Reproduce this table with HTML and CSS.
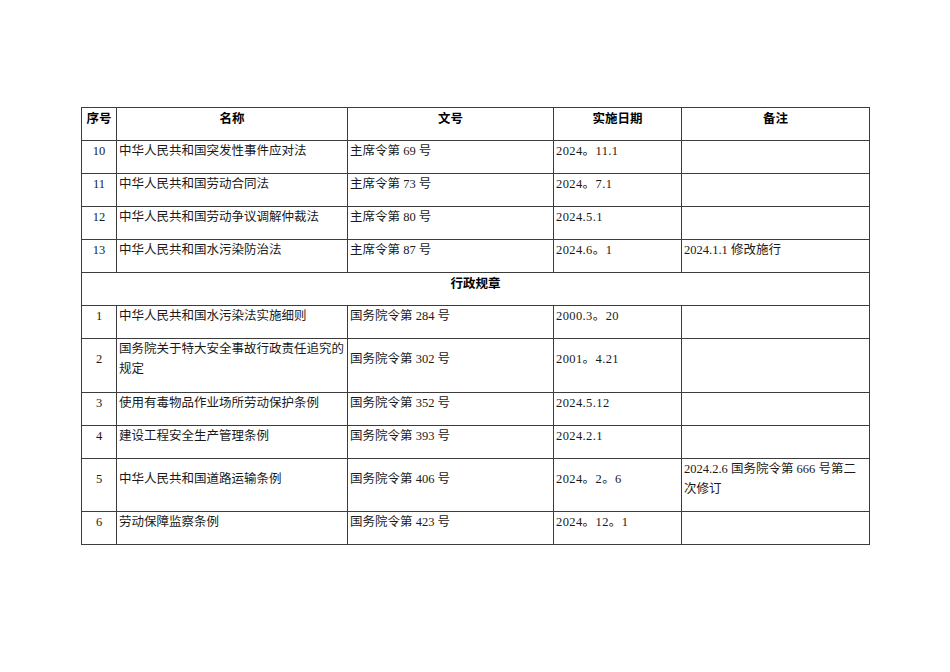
FILE: index.html
```html
<!DOCTYPE html>
<html lang="zh-CN">
<head>
<meta charset="utf-8">
<title>法规清单</title>
<link rel="stylesheet" href="styles.css">
</head>
<body>
<table class="law-table">
  <colgroup>
    <col class="c-no">
    <col class="c-name">
    <col class="c-doc">
    <col class="c-date">
    <col class="c-note">
  </colgroup>
  <thead>
    <tr>
      <th>序号</th>
      <th>名称</th>
      <th>文号</th>
      <th>实施日期</th>
      <th>备注</th>
    </tr>
  </thead>
  <tbody>
    <tr><td class="no">10</td><td>中华人民共和国突发性事件应对法</td><td>主席令第 69 号</td><td class="num">2024。11.1</td><td></td></tr>
    <tr><td class="no">11</td><td>中华人民共和国劳动合同法</td><td>主席令第 73 号</td><td class="num">2024。7.1</td><td></td></tr>
    <tr><td class="no">12</td><td>中华人民共和国劳动争议调解仲裁法</td><td>主席令第 80 号</td><td class="num">2024.5.1</td><td></td></tr>
    <tr><td class="no">13</td><td>中华人民共和国水污染防治法</td><td>主席令第 87 号</td><td class="num">2024.6。1</td><td>2024.1.1 修改施行</td></tr>
    <tr><td class="section" colspan="5">行政规章</td></tr>
    <tr><td class="no">1</td><td>中华人民共和国水污染法实施细则</td><td>国务院令第 284 号</td><td class="num">2000.3。20</td><td></td></tr>
    <tr class="tall"><td class="no">2</td><td>国务院关于特大安全事故行政责任追究的规定</td><td>国务院令第 302 号</td><td class="num">2001。4.21</td><td></td></tr>
    <tr><td class="no">3</td><td>使用有毒物品作业场所劳动保护条例</td><td>国务院令第 352 号</td><td class="num">2024.5.12</td><td></td></tr>
    <tr><td class="no">4</td><td>建设工程安全生产管理条例</td><td>国务院令第 393 号</td><td class="num">2024.2.1</td><td></td></tr>
    <tr><td class="no">5</td><td>中华人民共和国道路运输条例</td><td>国务院令第 406 号</td><td class="num">2024。2。6</td><td>2024.2.6 国务院令第 666 号第二次修订</td></tr>
    <tr><td class="no">6</td><td>劳动保障监察条例</td><td>国务院令第 423 号</td><td class="num">2024。12。1</td><td></td></tr>
  </tbody>
</table>
</body>
</html>
```

FILE: styles.css
```css
html, body {
  margin: 0;
  padding: 0;
  background: #ffffff;
}

body {
  padding: 107px 0 0 81px;
  font-family: "Liberation Serif", "Noto Sans CJK SC", serif;
  color: #1a1a1a;
}

.law-table {
  border-collapse: collapse;
  table-layout: fixed;
  width: 788px;
  font-size: 12.5px;
}

.c-no { width: 35px; }
.c-name { width: 231px; }
.c-doc { width: 206px; }
.c-date { width: 128px; }
.c-note { width: 188px; }

.law-table th,
.law-table td {
  border: 1px solid #3c3c3c;
  padding: 0 2px 12px 2px;
  line-height: 20px;
  vertical-align: middle;
  text-align: left;
  word-break: break-all;
}

.law-table tr.tall td {
  padding-bottom: 13px;
}

.law-table td.num {
  letter-spacing: 0.4px;
}

.law-table th {
  font-family: "Noto Sans CJK SC", sans-serif;
  font-weight: 700;
  text-align: center;
  color: #000000;
}

.law-table td.no {
  text-align: center;
}

.law-table td.section {
  font-family: "Noto Sans CJK SC", sans-serif;
  font-weight: 700;
  text-align: center;
  color: #000000;
}
```
